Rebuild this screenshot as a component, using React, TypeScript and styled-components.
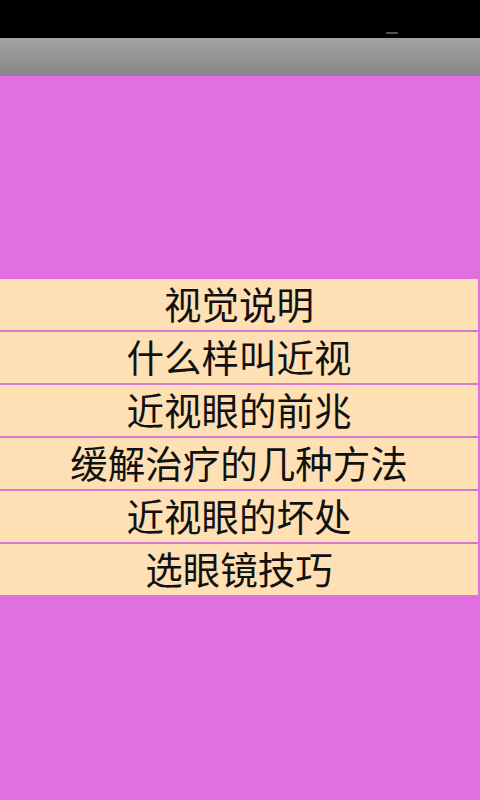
import styled, { createGlobalStyle } from "styled-components";

const GlobalStyle = createGlobalStyle`
  html, body {
    margin: 0;
    padding: 0;
    background: #e070e0;
  }
  body {
    font-family: "Noto Sans CJK SC", "Noto Sans", sans-serif;
  }
`;

const Screen = styled.div`
  width: 480px;
  height: 800px;
  display: flex;
  flex-direction: column;
  background-color: #e070e0;
  overflow: hidden;
`;

const StatusBar = styled.div`
  height: 38px;
  background-color: #000;
  display: flex;
  justify-content: flex-end;
  align-items: flex-end;
  padding-right: 82px;
`;

const StatusDash = styled.span`
  width: 12px;
  height: 2px;
  margin-bottom: 4px;
  background-color: #555;
  border-radius: 1px;
`;

const TitleBar = styled.div`
  height: 38px;
  background: linear-gradient(#a2a2a2, #8a8a8a 90%, #9a7e9a);
`;

const Menu = styled.ul`
  list-style: none;
  margin: 203px 0 0;
  padding: 0;
  width: 478px;
  display: flex;
  flex-direction: column;
`;

const MenuItem = styled.li`
  box-sizing: border-box;
  height: 53px;
  background-color: #fee0b4;
  border-bottom: 2px solid #d87ad4;
  display: flex;
  align-items: center;
  justify-content: center;
  font-size: 37.5px;
  line-height: 1;
  color: #111;
  padding-bottom: 3px;

  &:last-child {
    border-bottom: none;
    height: 51px;
  }
`;

const items = [
  "视觉说明",
  "什么样叫近视",
  "近视眼的前兆",
  "缓解治疗的几种方法",
  "近视眼的坏处",
  "选眼镜技巧",
];

const App = () => {
  return (
    <Screen>
      <GlobalStyle />
      <StatusBar>
        <StatusDash />
      </StatusBar>
      <TitleBar />
      <Menu>
        {items.map((text) => (
          <MenuItem key={text}>{text}</MenuItem>
        ))}
      </Menu>
    </Screen>
  );
};

export default App;
